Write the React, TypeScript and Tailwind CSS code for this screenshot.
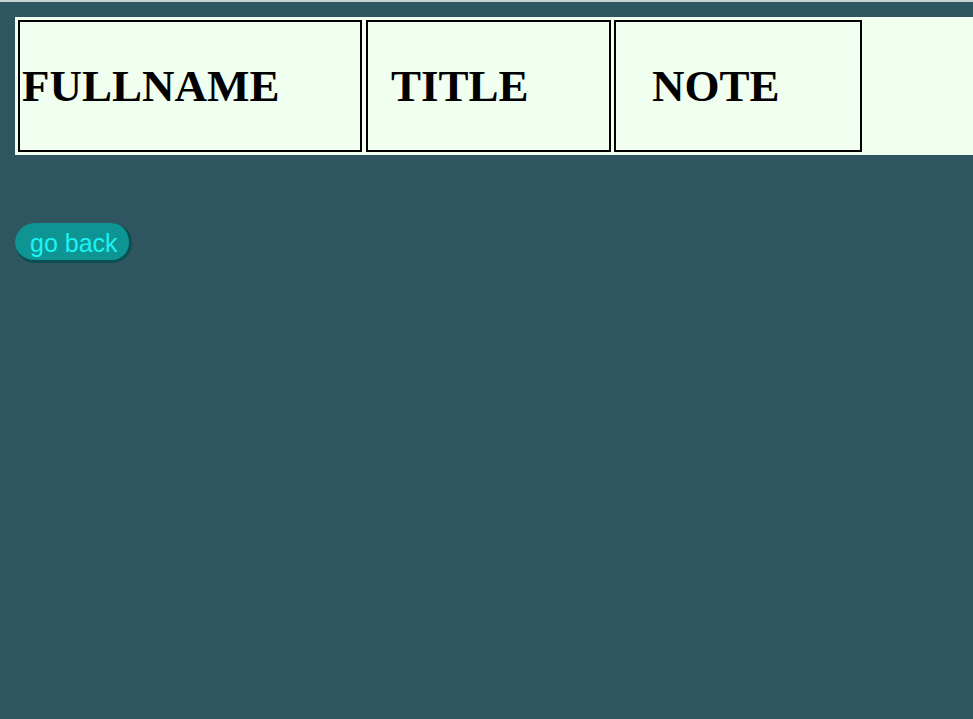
export default function App() {
  return (
    <div className="min-h-[719px] bg-[#2f5560]">
      <div className="h-[2px] bg-[#c9d3d6]" />
      <div className="ml-[15px] mt-[15px] flex h-[138px] bg-[#f0fff0] p-[3px] font-['Liberation_Serif',serif] text-[45px] font-bold leading-none text-black">
        <div className="flex w-[344px] items-center border-2 border-black pl-[2px]">FULLNAME</div>
        <div className="ml-[4px] flex w-[245px] items-center border-2 border-black pl-[23px]">TITLE</div>
        <div className="ml-[3px] flex w-[248px] items-center border-2 border-black pl-[36px]">NOTE</div>
      </div>
      <div className="ml-[15px] mt-[68px]">
        <button className="h-[40px] rounded-full border-r-[3px] border-b-[3px] border-[#0b4f52] bg-[#0f9494] pl-[15px] pr-[11px] pt-[3px] font-['Liberation_Sans',Arial,sans-serif] text-[25px] leading-none text-[#1cf3f3]">
          go back
        </button>
      </div>
    </div>
  );
}
